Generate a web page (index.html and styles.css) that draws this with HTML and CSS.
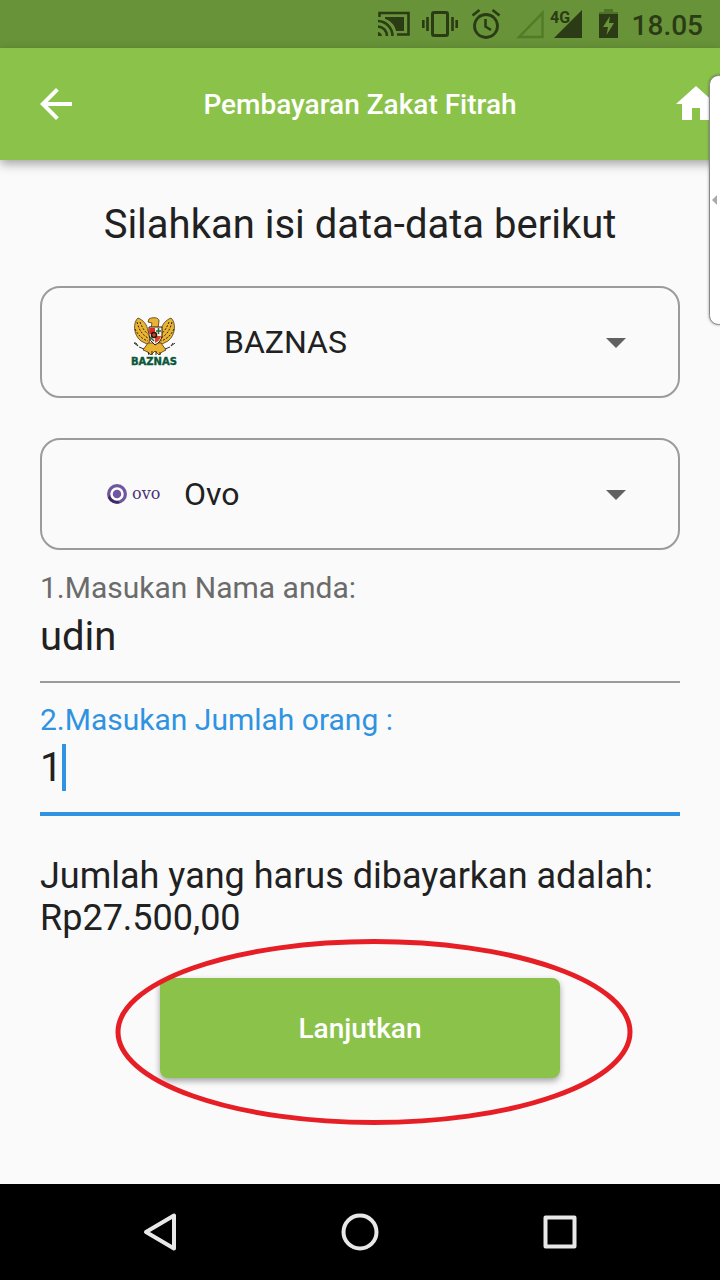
FILE: index.html
```html
<!DOCTYPE html>
<html lang="id">
<head>
<meta charset="utf-8">
<meta name="viewport" content="width=device-width, initial-scale=1">
<title>Pembayaran Zakat Fitrah</title>
<link rel="stylesheet" href="styles.css">
</head>
<body>
<div class="status-bar">
  <svg width="32" height="32" viewBox="0 0 32 32" aria-hidden="true">
    <path d="M1.500 9V5H30.500V26.500H19" fill="none" stroke="currentColor" stroke-width="2.600"/>
    <path d="M7 9H26V23H18C17 17 12 12 7 11Z" fill="currentColor"/>
    <path d="M0 24a5 5 0 0 1 4 4H0Z" fill="currentColor"/>
    <path d="M0 18.500A9.500 9.500 0 0 1 9 28M0 13A15 15 0 0 1 14.500 28" fill="none" stroke="currentColor" stroke-width="2.600"/>
  </svg>
  <svg width="36" height="32" viewBox="0 0 36 32" aria-hidden="true">
    <rect x="10.500" y="4.500" width="15" height="23" rx="1.500" fill="none" stroke="currentColor" stroke-width="3"/>
    <path d="M5.500 9V23M30.500 9V23M1.300 12V20M34.700 12V20" stroke="currentColor" stroke-width="2.600"/>
  </svg>
  <svg width="32" height="32" viewBox="0 0 32 32" aria-hidden="true">
    <circle cx="16" cy="18" r="11.500" fill="none" stroke="currentColor" stroke-width="2.800"/>
    <path d="M15.500 11V18.500L21 22M2.500 7.500L9.500 2M29.500 7.500L22.500 2" fill="none" stroke="currentColor" stroke-width="2.600"/>
  </svg>
  <svg width="70" height="32" viewBox="0 0 70 32" aria-hidden="true">
    <path d="M5 29L28.500 5V29Z" fill="none" stroke="#527a28" stroke-width="2.400"/>
    <path d="M40 30L68 2V30Z" fill="currentColor"/>
    <text x="36" y="15" class="network">4G</text>
  </svg>
  <svg width="24" height="32" viewBox="0 0 24 32" aria-hidden="true">
    <path d="M8 1H17V4H22V7H3V4H8Z" fill="#4d7328"/>
    <path d="M3 6H22V30H3Z" fill="currentColor"/>
    <path d="M14 8L7 19H12L10.500 27L18 15H13Z" fill="#689338"/>
  </svg>
  <time>18.05</time>
</div>

<header class="app-bar">
  <button class="icon-button back" type="button" aria-label="Kembali">
    <svg width="48" height="48" viewBox="0 0 24 24"><path d="M20 11H7.830l5.590-5.590L12 4l-8 8 8 8 1.410-1.410L7.830 13H20z" fill="currentColor"/></svg>
  </button>
  <h1>Pembayaran Zakat Fitrah</h1>
  <button class="icon-button home" type="button" aria-label="Beranda">
    <svg width="48" height="48" viewBox="0 0 24 24"><path d="M10 20v-6h4v6h5v-8h3L12 3 2 12h3v8z" fill="currentColor"/></svg>
  </button>
</header>

<main>
  <h2>Silahkan isi data-data berikut</h2>
  <form>
    <div class="picker picker-agency">
      <svg width="48" height="52" viewBox="0 0 48 52" aria-hidden="true">
        <g fill="#e8b432" stroke="#4c3410" stroke-width=".8">
          <path d="M17 15C16 8 12 4 7 2C2 6 2 19 10 25L18 29L19 18Z"/>
          <path d="M30 15C31 8 35 4 40 2C45 6 45 19 37 25L29 29L28 18Z"/>
          <path d="M17 27L12 34L17 36L20 39L24 35L28 39L31 36L35 34L30 27Z"/>
          <path d="M18 3C21 1 28 1 28 5L27 12H20L21 7L17 6Z"/>
        </g>
        <g fill="none" stroke="#2f210d" stroke-width="1" stroke-dasharray="2 1.500">
          <path d="M6 6C8 13 10 18 17 22M9 6C11 11 13 15 17 18M4 13C7 19 11 23 17 25"/>
          <path d="M41 6C39 13 37 18 30 22M38 6C36 11 34 15 30 18M43 13C40 19 36 23 30 25"/>
        </g>
        <path d="M3 27L7 30L5 27ZM8 31L13 33M44 27L40 30L42 27M39 31L34 33" fill="none" stroke="#332f28" stroke-width="1"/>
        <path d="M18 11H31V20Q30 26 24 29Q18 25 18 19Z" fill="#f6f2e7" stroke="#3c160c"/>
        <path d="M18.500 12H24V18H18.500Z" fill="#df2c20"/>
        <path d="M24 20H30Q29 25 24 27Z" fill="#d8432a"/>
        <path d="M25 15H30M27.500 12V18M19 21L23 25" stroke="#236b3b" stroke-width="1.500"/>
        <circle cx="23" cy="19" r="2.500" fill="#d8432a" stroke="#231a12" stroke-width="1.500"/>
        <path d="M17 36L18 39M21 35V39M25 35V39M29 36V39" stroke="#30240f" stroke-width="1"/>
        <text x="0" y="49" class="agency-name">BAZNAS</text>
      </svg>
      <select aria-label="Lembaga"><option>BAZNAS</option></select>
      <svg class="arrow" width="20" height="12" viewBox="0 0 20 12" aria-hidden="true"><path d="M0 2H20L10 12Z" fill="currentColor"/></svg>
    </div>
    <div class="picker picker-payment">
      <svg width="56" height="24" viewBox="0 0 56 24" aria-hidden="true">
        <circle cx="10" cy="12" r="10" fill="#7057a0"/>
        <path d="M1 16A10 10 0 0 0 13 21L4 11Z" fill="#3d2864"/>
        <circle cx="10" cy="12" r="5.500" fill="#7057a0" stroke="#fff" stroke-width="2.500"/>
        <text x="25" y="17" class="wallet-name">ovo</text>
      </svg>
      <select aria-label="Pembayaran"><option>Ovo</option></select>
      <svg class="arrow" width="20" height="12" viewBox="0 0 20 12" aria-hidden="true"><path d="M0 2H20L10 12Z" fill="currentColor"/></svg>
    </div>
    <div class="field">
      <label for="nama">1.Masukan Nama anda:</label>
      <div class="entry"><input id="nama" type="text" value="udin"></div>
    </div>
    <div class="field active">
      <label for="jumlah">2.Masukan Jumlah orang :</label>
      <div class="entry"><input id="jumlah" type="text" inputmode="numeric" value="1"><span class="caret"></span></div>
    </div>
    <p class="total">Jumlah yang harus dibayarkan adalah: Rp27.500,00</p>
    <div class="action">
      <button class="submit" type="button">Lanjutkan</button>
      <svg class="highlight" viewBox="0 0 518 186" preserveAspectRatio="none" aria-hidden="true"><ellipse cx="259" cy="93" rx="256" ry="90.500" fill="none" stroke="#e61e25" stroke-width="5"/></svg>
    </div>
  </form>
</main>

<aside class="edge-panel" aria-label="Panel samping">
  <svg width="5" height="10" viewBox="0 0 5 10" aria-hidden="true"><path d="M5 0V10L0 5Z" fill="#aaa"/></svg>
</aside>

<nav class="nav-bar" aria-label="Navigasi">
  <button type="button" aria-label="Kembali"><svg width="40" height="40" viewBox="0 0 40 40"><path d="M6 20L34 3.500V36.500Z"/></svg></button>
  <button type="button" aria-label="Layar utama"><svg width="40" height="40" viewBox="0 0 40 40"><circle cx="20" cy="20" r="16.500"/></svg></button>
  <button type="button" aria-label="Terkini"><svg width="40" height="40" viewBox="0 0 40 40"><rect x="5.500" y="5.500" width="29" height="29"/></svg></button>
</nav>
</body>
</html>
```
FILE: styles.css
```css
* { box-sizing: border-box; }

body {
  position: relative;
  display: flex;
  flex-direction: column;
  min-height: 100vh;
  margin: 0;
  overflow-x: hidden;
  background: #fafafa;
  color: #212121;
  font-family: Roboto, sans-serif;
}

h1, h2, p { margin: 0; }
svg { display: block; flex: none; }
button { padding: 0; border: 0; background: none; color: inherit; font: inherit; cursor: pointer; }

.status-bar {
  display: flex;
  align-items: center;
  justify-content: flex-end;
  gap: 12px;
  height: 48px;
  padding-right: 17px;
  background: #689338;
  color: #2a3b16;
}
.status-bar time { padding-top: 4px; font-size: 28px; line-height: 32px; font-weight: 500; }
.network { font-family: Roboto, sans-serif; font-size: 16px; font-weight: 700; fill: #2a3b16; }

.app-bar {
  display: grid;
  grid-template-columns: 1fr auto 1fr;
  align-items: center;
  height: 112px;
  background: #8bc34a;
  color: #fff;
  box-shadow: 0 4px 10px rgba(0, 0, 0, .35);
}
.app-bar h1 { padding-top: 2px; font-size: 28px; line-height: 32px; font-weight: 500; }
.back { margin-left: 32px; justify-self: start; }
.home { justify-self: end; }

main { flex: 1; padding: 41px 40px 60px; }
h2 { font-size: 40px; line-height: 48px; font-weight: 400; text-align: center; }
form { padding-top: 37px; }

.picker {
  display: flex;
  align-items: center;
  height: 112px;
  margin-bottom: 40px;
  padding-right: 52px;
  border: 2px solid #9b9b9b;
  border-radius: 20px;
}
.picker-agency { padding-left: 89px; }
.picker-agency select { padding-left: 45px; }
.picker-payment { margin-bottom: 20px; padding-left: 65px; }
.picker-payment select { padding-left: 21px; }
.picker select {
  flex: 1;
  min-width: 0;
  height: 100%;
  border: 0;
  appearance: none;
  background: none;
  color: inherit;
  font: 32px/40px Roboto, sans-serif;
}
.arrow { color: #616161; }
.agency-name { font: 700 10px "DejaVu Sans", sans-serif; fill: #0b5639; stroke: #0b5639; stroke-width: .4px; }
.wallet-name { font: 16px "DejaVu Serif", serif; fill: #4a3474; }

.field { margin-bottom: 19px; border-bottom: 2px solid #9b9b9b; }
.field label { display: block; color: #6b6b6b; font-size: 30px; line-height: 36px; }
.entry { display: flex; height: 75px; padding: 6px 0 21px; }
.field input {
  flex: 1;
  min-width: 0;
  padding: 1px 0 0;
  border: 0;
  outline: 0;
  background: none;
  color: inherit;
  font: 40px/48px Roboto, sans-serif;
}
.active { border-bottom: 4px solid #3093e1; }
.active label { color: #3093e1; }
.active .entry { height: 74px; }
.active input { flex: none; field-sizing: content; }
.caret { width: 4px; background: #3093e1; }

.total { padding: 20px 0 39px; font-size: 36px; line-height: 42px; }
.action { position: relative; width: 400px; max-width: 100%; margin: 0 auto; }
.submit {
  display: block;
  width: 100%;
  height: 100px;
  border-radius: 8px;
  background: #8bc34a;
  box-shadow: 0 3px 6px rgba(0, 0, 0, .35);
  color: #fff;
  font-size: 28px;
  font-weight: 500;
}
.highlight { position: absolute; top: -39px; left: -45px; width: 518px; height: 186px; pointer-events: none; }

.edge-panel {
  position: absolute;
  top: 75px;
  right: -8px;
  display: flex;
  align-items: center;
  width: 19px;
  height: 250px;
  padding-left: 2px;
  border: 1px solid #888;
  border-radius: 10px;
  background: #fff;
  box-shadow: 0 0 3px rgba(0, 0, 0, .4);
}

.nav-bar {
  display: flex;
  align-items: center;
  justify-content: center;
  gap: 160px;
  height: 96px;
  background: #000;
}
.nav-bar svg { fill: none; stroke: #e8e8e8; stroke-width: 4; stroke-linejoin: round; }
```
